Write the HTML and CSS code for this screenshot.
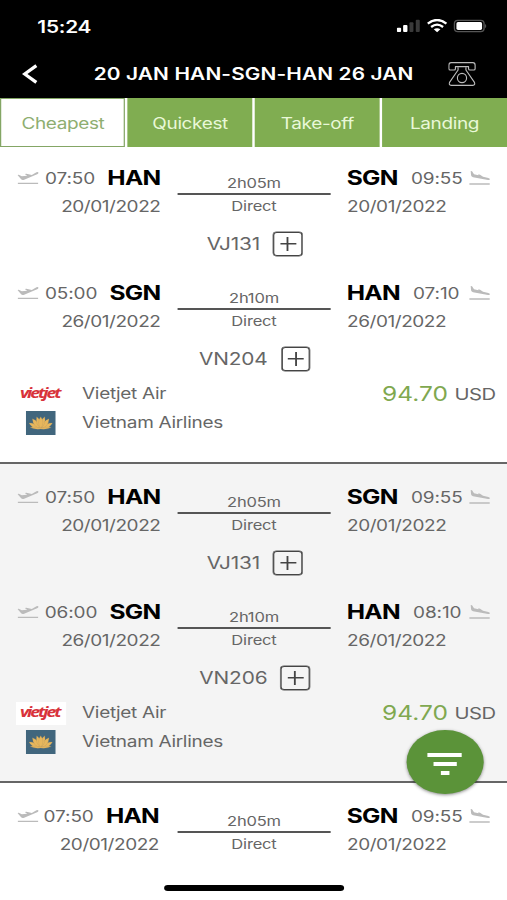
FILE: index.html
```html
<!DOCTYPE html>
<html lang="en">
<head>
<meta charset="utf-8">
<title>Flights</title>
<link rel="stylesheet" href="styles.css">
</head>
<body>
<svg class="defs" aria-hidden="true">
  <symbol id="takeoff" viewBox="0 0 65 42" preserveAspectRatio="none">
    <path d="M1 12l4-1 9 5 16-2-7-5 5-1 16 4 14-8q6-2 6 1 0 3-4 5L21 26q-6 2-9-1z"/>
    <path d="M2 35h61v4H2z"/>
  </symbol>
  <symbol id="landing" viewBox="0 0 65 42" preserveAspectRatio="none">
    <path d="M5 0l4 1 6 9 13 3 0-3 5 1 9 6 16 4q6 2 5 4-2 3-6 2L12 19q-5-1-6-6z"/>
    <path d="M1 37h61v4H1z"/>
  </symbol>
  <symbol id="lotus" viewBox="0 0 90 72" preserveAspectRatio="none">
    <path fill="#41667d" d="M0 0h90v72H0z"/>
    <g fill="#e8b75c" stroke="#a08a62" stroke-width=".6">
      <path d="M10 36q16-2 29 16-20 2-29-16zM80 36q-16-2-29 16 20 2 29-16z"/>
      <path d="M20 23q20 7 24 29-22-3-24-29zM70 23q-20 7-24 29 22-3 24-29z"/>
      <path d="M33 17q16 12 12 35-17-12-12-35zM57 17q-16 12-12 35 17-12 12-35z"/>
      <path d="M45 17q13 17 0 36-13-19 0-36z"/>
      <path d="M13 49q18-2 32 2 14-4 32-2-10 7-32 5-22 2-32-5z"/>
    </g>
  </symbol>
</svg>
<div class="phone">
  <header class="header">
    <div class="status">
      <span class="clock">15:24</span>
      <svg class="status-icons" viewBox="0 0 272 42" preserveAspectRatio="none">
        <g fill="#fff"><rect y="26" width="13" height="13" rx="3"/><rect x="19" y="18" width="13" height="21" rx="3"/></g>
        <g fill="#3a3a3a"><rect x="38" y="10" width="12" height="29" rx="3"/><rect x="57" y="2" width="12" height="37" rx="3"/></g>
        <g fill="none" stroke="#fff" stroke-width="7"><path d="M93 14q28-22 56 0"/><path d="M103 24q18-14 36 0"/></g>
        <path fill="#fff" d="M111 31q10-7 20 0l-10 9z"/>
        <rect x="173" y="4" width="89" height="34" rx="10" fill="none" stroke="#555" stroke-width="4"/>
        <rect x="179" y="9" width="77" height="24" rx="5" fill="#fff"/>
        <path fill="#555" d="M265 14q7 7 0 14z"/>
      </svg>
    </div>
    <div class="titlebar">
      <svg class="back" viewBox="0 0 46 60" preserveAspectRatio="none"><path d="M43 5L8 30l35 25" fill="none" stroke="#fff" stroke-width="10"/></svg>
      <h1 class="title">20 JAN HAN-SGN-HAN 26 JAN</h1>
      <svg class="call" viewBox="0 0 84 72" preserveAspectRatio="none">
        <g fill="none" stroke="#bbb" stroke-width="3.5" stroke-linejoin="round">
          <path d="M9 2h66q7 0 7 8v10q0 4-4 4H66q-4 0-4-4v-6H22v6q0 4-4 4H6q-4 0-4-4V10q0-8 7-8z"/>
          <path d="M30 16v8L4 61q-3 9 5 9h66q8 0 5-9L54 24v-8"/>
          <circle cx="42" cy="48" r="14"/>
        </g>
      </svg>
    </div>
  </header>

  <nav class="tabs">
    <a class="tab active">Cheapest</a>
    <a class="tab">Quickest</a>
    <a class="tab">Take-off</a>
    <a class="tab">Landing</a>
  </nav>

  <main class="list">
    <article class="card">
      <section class="leg">
        <div class="from">
          <div class="place"><svg class="plane"><use href="#takeoff"/></svg><span class="time">07:50</span><b class="code">HAN</b></div>
          <div class="date">20/01/2022</div>
        </div>
        <div class="via"><span class="dur">2h05m</span><span class="stops">Direct</span></div>
        <div class="to">
          <div class="place"><b class="code">SGN</b><span class="time">09:55</span><svg class="plane"><use href="#landing"/></svg></div>
          <div class="date">20/01/2022</div>
        </div>
        <div class="flight"><span>VJ131</span><i class="plus"></i></div>
      </section>
      <section class="leg">
        <div class="from">
          <div class="place"><svg class="plane"><use href="#takeoff"/></svg><span class="time">05:00</span><b class="code">SGN</b></div>
          <div class="date">26/01/2022</div>
        </div>
        <div class="via"><span class="dur">2h10m</span><span class="stops">Direct</span></div>
        <div class="to">
          <div class="place"><b class="code">HAN</b><span class="time">07:10</span><svg class="plane"><use href="#landing"/></svg></div>
          <div class="date">26/01/2022</div>
        </div>
        <div class="flight"><span>VN204</span><i class="plus"></i></div>
      </section>
      <footer class="summary">
        <ul class="airlines">
          <li><span class="logo"><em class="vietjet">vietjet</em></span>Vietjet Air</li>
          <li><span class="logo"><svg class="lotus"><use href="#lotus"/></svg></span>Vietnam Airlines</li>
        </ul>
        <div class="price"><span class="amount">94.70</span><span class="currency">USD</span></div>
      </footer>
    </article>

    <article class="card alt">
      <section class="leg">
        <div class="from">
          <div class="place"><svg class="plane"><use href="#takeoff"/></svg><span class="time">07:50</span><b class="code">HAN</b></div>
          <div class="date">20/01/2022</div>
        </div>
        <div class="via"><span class="dur">2h05m</span><span class="stops">Direct</span></div>
        <div class="to">
          <div class="place"><b class="code">SGN</b><span class="time">09:55</span><svg class="plane"><use href="#landing"/></svg></div>
          <div class="date">20/01/2022</div>
        </div>
        <div class="flight"><span>VJ131</span><i class="plus"></i></div>
      </section>
      <section class="leg">
        <div class="from">
          <div class="place"><svg class="plane"><use href="#takeoff"/></svg><span class="time">06:00</span><b class="code">SGN</b></div>
          <div class="date">26/01/2022</div>
        </div>
        <div class="via"><span class="dur">2h10m</span><span class="stops">Direct</span></div>
        <div class="to">
          <div class="place"><b class="code">HAN</b><span class="time">08:10</span><svg class="plane"><use href="#landing"/></svg></div>
          <div class="date">26/01/2022</div>
        </div>
        <div class="flight"><span>VN206</span><i class="plus"></i></div>
      </section>
      <footer class="summary">
        <ul class="airlines">
          <li><span class="logo"><em class="vietjet">vietjet</em></span>Vietjet Air</li>
          <li><span class="logo"><svg class="lotus"><use href="#lotus"/></svg></span>Vietnam Airlines</li>
        </ul>
        <div class="price"><span class="amount">94.70</span><span class="currency">USD</span></div>
      </footer>
    </article>

    <article class="card last">
      <section class="leg">
        <div class="from">
          <div class="place"><svg class="plane"><use href="#takeoff"/></svg><span class="time">07:50</span><b class="code">HAN</b></div>
          <div class="date">20/01/2022</div>
        </div>
        <div class="via"><span class="dur">2h05m</span><span class="stops">Direct</span></div>
        <div class="to">
          <div class="place"><b class="code">SGN</b><span class="time">09:55</span><svg class="plane"><use href="#landing"/></svg></div>
          <div class="date">20/01/2022</div>
        </div>
      </section>
    </article>
  </main>

  <button class="filter" aria-label="Filter"><i></i><i></i><i></i></button>
  <div class="home"></div>
</div>
</body>
</html>
```

FILE: styles.css
```css
* { box-sizing: border-box; margin: 0; padding: 0; }
html, body { width: 507px; height: 900px; overflow: hidden; background: #fff; }
body { font-family: Inter, "Liberation Sans", sans-serif; color: #666; }
.defs { position: absolute; width: 0; height: 0; }

/* 414pt-wide screen stretched over the window's width */
.phone {
  position: relative;
  width: 414px;
  height: 900px;
  overflow: hidden;
  transform: scaleX(1.22464);
  transform-origin: 0 0;
}

.header { height: 98px; background: #000; color: #fff; }
.status { display: flex; justify-content: space-between; height: 50px; padding: 19px 16px 0 30.5px; }
.clock { font-size: 17px; font-weight: 600; line-height: 16px; letter-spacing: -.2px; }
.status-icons { width: 74px; height: 14px; }
.titlebar { display: flex; align-items: center; height: 47px; padding: 0 25.5px 0 18px; }
.back { width: 12.5px; height: 20px; }
.title { margin-left: 46px; font-size: 17px; font-weight: 600; line-height: 20px; letter-spacing: .11px; white-space: nowrap; }
.call { width: 22.5px; height: 24px; margin-left: auto; }

.tabs { display: grid; grid-template-columns: repeat(4, 1fr); gap: 1.8px; height: 49px; padding-left: .4px; background: #fff; }
.tab {
  display: flex; align-items: center; justify-content: center; padding-top: 2px;
  background: #80ad51; color: #e9f8d8; font-size: 15.5px; letter-spacing: -.3px;
}
.tab.active { background: #fff; color: #8eae70; border: 1.5px solid #84a665; }

.card { height: 319px; padding-top: 19.5px; border-bottom: 2px solid #666; background: #fff; }
.card:first-child { height: 316.5px; padding-top: 17px; }
.card.alt { background: #f4f4f4; }
.card.last { border-bottom: 0; }
.leg {
  display: grid;
  grid-template-columns: 131px 125px 1fr;
  grid-template-rows: 56px 40px;
  column-gap: 13.9px;
  row-gap: 4px;
  height: 100px;
  margin-bottom: 15px;
}
.leg:nth-of-type(2) { margin-bottom: 0; }
.place { display: flex; align-items: center; height: 28px; }
.from .place, .from .date { justify-content: flex-end; text-align: right; }
.last .from { padding-right: 1.2px; }
.date { height: 28px; line-height: 30px; font-size: 15.5px; letter-spacing: -.36px; }
.time { font-size: 15.5px; letter-spacing: -.1px; }
.code { font-size: 20px; font-weight: 700; color: #000; letter-spacing: -.6px; }
.from .plane { margin-right: auto; margin-left: 14px; }
.from .code { margin-left: 10px; }
.to .code { margin-left: -.6px; }
.to .date { margin-left: -.4px; }
.to .time { margin-left: 10.8px; }
.to .plane { margin-left: auto; margin-right: 13px; }
.plane { width: 17.7px; height: 14px; fill: #bbb; flex: none; }
.via { display: flex; flex-direction: column; text-align: center; font-size: 13.5px; letter-spacing: -.15px; padding-top: 10px; }
.dur { height: 20.5px; line-height: 18px; border-bottom: 2px solid #555; }
.stops { line-height: 22px; }
.flight {
  grid-column: 1 / -1;
  display: flex; align-items: center; justify-content: center; gap: 11px;
  font-size: 17px; letter-spacing: -.1px; padding-left: 1.5px;
}
.plus {
  width: 23.4px; height: 23.4px; border: 1px solid #444; border-radius: 3px;
  box-shadow: 0 0 0 .4px #555;
  background:
    linear-gradient(#444, #444) center / 13px 1.5px no-repeat,
    linear-gradient(#444, #444) center / 1.5px 14px no-repeat;
}
.summary { display: flex; justify-content: space-between; padding: 0 9.5px 0 13px; }
.airlines { list-style: none; font-size: 15.5px; line-height: 20px; letter-spacing: -.24px; }
.airlines li { display: flex; align-items: center; height: 29px; padding-top: 1px; }
.logo { display: flex; align-items: center; justify-content: center; width: 41px; height: 23px; margin-right: 13px; }
.airlines li:first-child .logo { background: #fff; }
.vietjet { font: italic 700 14.5px/20px "Open Sans", sans-serif; color: #d8323a; letter-spacing: -1.7px; padding: 0 2px 3px 0; }
.lotus { width: 24.5px; height: 24px; }
.price { display: flex; align-items: center; height: 29px; padding-top: 1px; }
.amount { font-size: 20px; color: #7fa850; }
.currency { font-size: 16.5px; margin-left: 5.5px; letter-spacing: -.5px; }

.filter {
  position: absolute; left: 332px; top: 730px;
  display: flex; flex-direction: column; align-items: center; justify-content: center; gap: 5.5px;
  width: 62.5px; height: 64px; padding-top: 4px;
  border: 0; border-radius: 50%; background: #5b9339;
  box-shadow: 0 1px 3px rgba(0, 0, 0, .45);
}
.filter i { height: 3.6px; background: #fff; }
.filter i:nth-child(1) { width: 28px; }
.filter i:nth-child(2) { width: 19px; }
.filter i:nth-child(3) { width: 6.5px; }
.home { position: absolute; left: 134px; top: 885px; width: 147px; height: 6px; border-radius: 3px; background: #000; }
```
